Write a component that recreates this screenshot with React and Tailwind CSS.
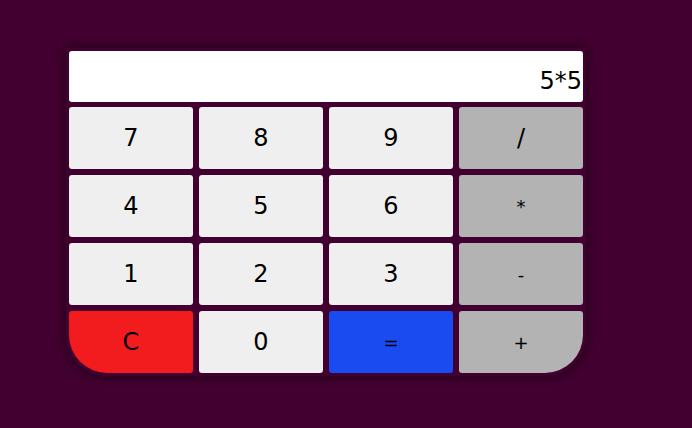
import React from "react";

const rows = [
  ["7", "8", "9", "/"],
  ["4", "5", "6", "*"],
  ["1", "2", "3", "-"],
  ["C", "0", "=", "+"],
];

function cls(label, r, c) {
  const small = label === "+" || label === "=" || label === "*" || label === "-";
  let base =
    "flex items-center justify-center h-[62px] rounded-[3px] text-black " +
    (small ? "text-[18px] " : "text-[24px] ");
  if (label === "C") return base + "bg-[#f21b1e] rounded-bl-[38px]";
  if (label === "=") return base + "bg-[#1a4bf0]";
  if (c === 3) return base + "bg-[#b3b3b3]" + (r === 3 ? " rounded-br-[38px]" : "");
  return base + "bg-[#efefef]";
}

export default function App() {
  return (
    <div
      className="w-full h-screen bg-[#420030] pl-[66px] pt-[48px]"
      style={{ fontFamily: '"DejaVu Sans", "Liberation Sans", sans-serif' }}
    >
      <div className="w-[520px] p-[3px] bg-[#420030] rounded-b-[40px] rounded-t-[3px] shadow-[0_0_12px_rgba(0,0,0,0.6)]">
        <div className="h-[51px] bg-white rounded-[3px] flex items-end justify-end pr-[1px] pb-[9px] text-[24px] text-black leading-none">
          5*5
        </div>
        <div className="grid grid-cols-4 gap-x-[6px] gap-y-[6px] mt-[5px]">
          {rows.map((row, r) =>
            row.map((label, c) => (
              <div key={label} className={cls(label, r, c)}>
                {label}
              </div>
            ))
          )}
        </div>
      </div>
    </div>
  );
}
